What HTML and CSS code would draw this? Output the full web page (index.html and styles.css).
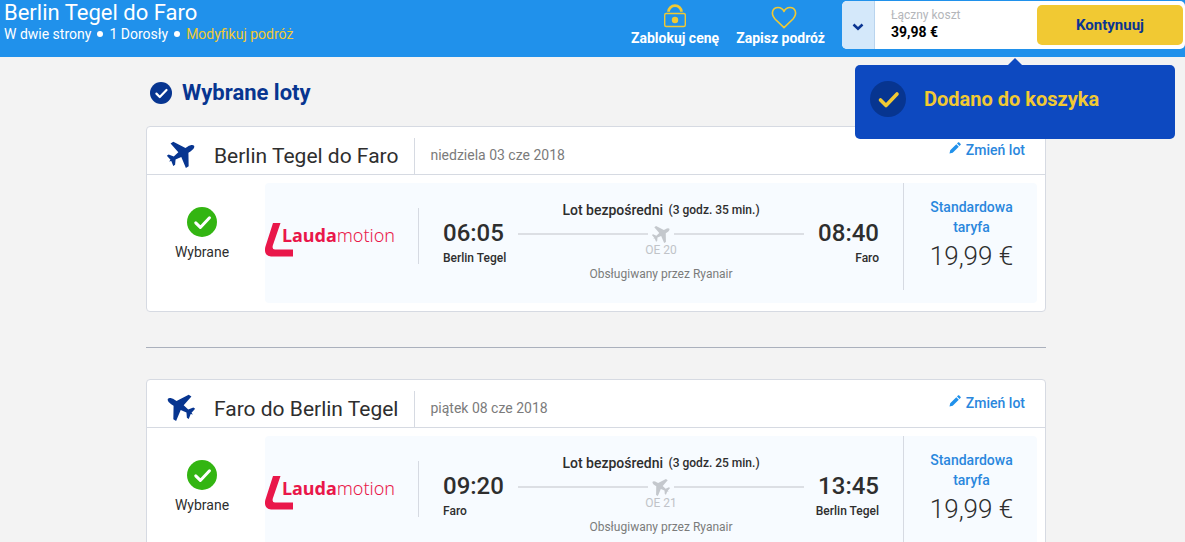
FILE: index.html
```html
<!DOCTYPE html>
<html lang="pl">
<head>
<meta charset="utf-8">
<title>Wybrane loty</title>
<link rel="stylesheet" href="styles.css">
</head>
<body>
<svg class="defs" aria-hidden="true">
  <symbol id="plane" viewBox="0 0 30 30" overflow="visible">
    <path transform="rotate(58 15 15)" d="M15 -1.500C16.800 -1.500 18 1.500 18 4.500V7.500L30.500 15V18.500L18 16.500L16.800 23L21.500 26.500V28.800L15.800 27.800L15 30L14.200 27.800L8.500 28.800V26.500L13.200 23L12 16.500L-0.500 18.500V15L12 7.500V4.500C12 1.500 13.200 -1.500 15 -1.500Z"/>
  </symbol>
  <symbol id="check" viewBox="0 0 36 36">
    <path d="M10.500 19L16 24.500L27 13" fill="none" stroke="currentColor" stroke-width="3.600" stroke-linecap="round" stroke-linejoin="round"/>
  </symbol>
  <symbol id="pencil" viewBox="0 0 12 12">
    <path d="M0.500 11.500L1.200 8.300L7.300 2.200L9.800 4.700L3.700 10.800ZM8 1.500L9.200 0.300Q9.600 0 10 0.300L11.700 2Q12 2.400 11.700 2.800L10.500 4Z"/>
  </symbol>
  <symbol id="lauda" viewBox="0 0 28 34">
    <path d="M8 0H15.500L7.800 22.500Q6.800 26.500 10 26.500H28V33.500H6Q-1.500 32.500 0.300 24Z"/>
  </symbol>
</svg>

<header class="topbar">
  <div class="trip">
    <h1 class="trip-title">Berlin Tegel do Faro</h1>
    <div class="trip-info">
      <span>W dwie strony</span><i class="dot"></i><span>1 Dorosły</span><i class="dot"></i><a class="modify" href="#">Modyfikuj podróż</a>
    </div>
  </div>
  <div class="actions">
    <button class="action" type="button">
      <svg class="action-icon" viewBox="0 0 24 24" fill="none" stroke="#f1c933" aria-hidden="true"><path d="M5.500 7.800A6.500 6.200 0 0 1 18.500 7.800" stroke-width="2.800"/><rect x="1.700" y="9.500" width="20.600" height="13" rx="1.500" stroke-width="1.400"/><circle cx="12" cy="16" r="3.200" fill="#f1c933" stroke="none"/></svg>
      Zablokuj cenę
    </button>
    <button class="action" type="button">
      <svg class="action-icon" viewBox="-3 0 24 24" fill="none" stroke="#f1c933" stroke-width="1.600" aria-hidden="true"><path d="M12 23.700L3 15C-2 9 1 3.500 6 3.500C9 3.500 11 5 12 7.500C13 5 15 3.500 18 3.500C23 3.500 26 9 21 15Z" stroke-linejoin="round"/></svg>
      Zapisz podróż
    </button>
  </div>
  <div class="cart">
    <button class="cart-toggle" type="button" aria-label="Pokaż szczegóły">
      <svg width="12" height="8" viewBox="0 0 12 8" fill="none" stroke="#0b3592" stroke-width="2.500" aria-hidden="true"><path d="M1.500 1.500L6 5.700L10.500 1.500"/></svg>
    </button>
    <div class="cart-total">
      <span class="cart-label">Łączny koszt</span>
      <strong class="cart-sum">39,98 €</strong>
    </div>
    <button class="continue" type="button">Kontynuuj</button>
    <div class="toast" role="status">
      <svg class="toast-icon" aria-hidden="true"><use href="#check"/></svg>
      <span>Dodano do koszyka</span>
    </div>
  </div>
</header>

<main class="page">
  <div class="content">
    <h2 class="section-title"><svg class="section-icon" aria-hidden="true"><use href="#check"/></svg>Wybrane loty</h2>

    <section class="card">
      <div class="card-head">
        <svg class="card-plane" aria-hidden="true"><use href="#plane"/></svg>
        <h3 class="route">Berlin Tegel do Faro</h3>
        <span class="date">niedziela 03 cze 2018</span>
        <a class="change" href="#"><svg class="pencil" aria-hidden="true"><use href="#pencil"/></svg>Zmień lot</a>
      </div>
      <div class="card-body">
        <div class="selected"><svg class="selected-icon" aria-hidden="true"><use href="#check"/></svg>Wybrane</div>
        <div class="panel">
          <div class="brand"><svg class="brand-mark" aria-hidden="true"><use href="#lauda"/></svg><span class="brand-name"><b>Lauda</b>motion</span></div>
          <div class="flight">
            <div class="summary"><strong>Lot bezpośredni</strong> <b class="duration">(3 godz. 35 min.)</b></div>
            <div class="stop"><span class="time">06:05</span><span class="city">Berlin Tegel</span></div>
            <div class="leg">
              <div class="line"><svg class="leg-plane" aria-hidden="true"><use href="#plane"/></svg></div>
              <span class="number">OE 20</span>
            </div>
            <div class="stop arrive"><span class="time">08:40</span><span class="city">Faro</span></div>
            <div class="operator">Obsługiwany przez Ryanair</div>
          </div>
          <div class="fare"><span class="fare-name">Standardowa taryfa</span><span class="price">19,99 €</span></div>
        </div>
      </div>
    </section>

    <hr class="divider">

    <section class="card">
      <div class="card-head">
        <svg class="card-plane back" aria-hidden="true"><use href="#plane"/></svg>
        <h3 class="route">Faro do Berlin Tegel</h3>
        <span class="date">piątek 08 cze 2018</span>
        <a class="change" href="#"><svg class="pencil" aria-hidden="true"><use href="#pencil"/></svg>Zmień lot</a>
      </div>
      <div class="card-body">
        <div class="selected"><svg class="selected-icon" aria-hidden="true"><use href="#check"/></svg>Wybrane</div>
        <div class="panel">
          <div class="brand"><svg class="brand-mark" aria-hidden="true"><use href="#lauda"/></svg><span class="brand-name"><b>Lauda</b>motion</span></div>
          <div class="flight">
            <div class="summary"><strong>Lot bezpośredni</strong> <b class="duration">(3 godz. 25 min.)</b></div>
            <div class="stop"><span class="time">09:20</span><span class="city">Faro</span></div>
            <div class="leg">
              <div class="line"><svg class="leg-plane back" aria-hidden="true"><use href="#plane"/></svg></div>
              <span class="number">OE 21</span>
            </div>
            <div class="stop arrive"><span class="time">13:45</span><span class="city">Berlin Tegel</span></div>
            <div class="operator">Obsługiwany przez Ryanair</div>
          </div>
          <div class="fare"><span class="fare-name">Standardowa taryfa</span><span class="price">19,99 €</span></div>
        </div>
      </div>
    </section>
  </div>
</main>
</body>
</html>
```

FILE: styles.css
```css
* { box-sizing: border-box; }
html { overflow: hidden; }
body {
  margin: 0;
  background: #f3f3f3;
  color: #2e2e2e;
  font-family: Roboto, "Liberation Sans", sans-serif;
  font-size: 14px;
  line-height: 20px;
}
h1, h2, h3 { margin: 0; font-weight: 400; }
button { border: 0; padding: 0; font: inherit; cursor: pointer; }
a { text-decoration: none; }
.defs { position: absolute; width: 0; height: 0; }

.topbar {
  display: flex;
  height: 57px;
  background: #2091eb;
  color: #fff;
}
.trip { flex: 1; padding-left: 4px; }
.trip-title { font-size: 22px; line-height: 25px; }
.trip-info { display: flex; align-items: center; line-height: 18px; }
.dot { width: 6px; height: 6px; margin: 0 6px; border-radius: 50%; background: #fff; }
.modify { color: #f1c933; }

.actions { display: flex; gap: 17px; margin-right: 17px; }
.action {
  display: flex;
  flex-direction: column;
  align-items: center;
  align-self: flex-start;
  padding-top: 4px;
  background: none;
  color: #fff;
  font-weight: 700;
}
.action-icon { width: 24px; height: 24px; overflow: visible; }

.cart {
  position: relative;
  display: flex;
  width: 343px;
  height: 48px;
  margin-top: 1px;
  border-radius: 5px;
  background: #fff;
}
.cart-toggle {
  display: flex;
  align-items: center;
  justify-content: center;
  width: 33px;
  padding-top: 4px;
  border-right: 1px solid #b9d4ee;
  border-radius: 5px 0 0 5px;
  background: #d4e8fa;
}
.cart-total { display: flex; flex: 1; flex-direction: column; padding: 5px 16px; }
.cart-label { color: #b4b6ba; font-size: 12px; line-height: 18px; }
.cart-sum { color: #000; line-height: 16px; }
.continue {
  width: 146px;
  margin: 4px 2px 4px 0;
  border-radius: 5px;
  background: #f1c933;
  color: #0b3592;
  font-size: 15px;
  font-weight: 700;
}
.toast {
  position: absolute;
  top: 64px;
  right: 10px;
  display: flex;
  align-items: center;
  gap: 18px;
  width: 320px;
  height: 74px;
  padding: 0 15px 6px;
  border-radius: 5px;
  background: #0d49c0;
  color: #f1c933;
  font-size: 20px;
  font-weight: 700;
}
.toast::before {
  content: "";
  position: absolute;
  top: -7px;
  left: 153px;
  border: 7px solid transparent;
  border-top: 0;
  border-bottom-color: #0d49c0;
}
.toast-icon { width: 36px; height: 36px; border-radius: 50%; background: #073590; }

.page { padding-left: 7px; }
.content { max-width: 900px; margin: 0 auto; }
.section-title {
  display: flex;
  align-items: center;
  gap: 10px;
  padding: 20px 0 18px 4px;
  color: #073590;
  font-size: 22px;
  font-weight: 700;
  line-height: 31px;
}
.section-icon { width: 22px; height: 22px; border-radius: 50%; background: #073590; color: #fff; }

.card { border: 1px solid #d6dae2; border-radius: 4px; background: #fff; }
.card-head {
  display: flex;
  align-items: flex-end;
  height: 48px;
  padding: 0 20px;
  border-bottom: 1px solid #d6dae2;
}
.card-plane { width: 28px; height: 28px; margin-bottom: 6px; fill: #073590; overflow: visible; }
.back { transform: scaleX(-1); }
.route {
  padding: 0 16px 0 19px;
  border-right: 1px solid #d6dae2;
  font-size: 21px;
  line-height: 36px;
}
.date { flex: 1; padding-left: 15px; color: #7b7b7b; line-height: 38px; }
.change { display: flex; gap: 5px; color: #2a87dd; font-weight: 500; line-height: 48px; }
.pencil { width: 12px; height: 12px; margin-top: 16px; fill: #2091eb; }

.card-body { display: flex; padding: 8px; }
.selected {
  display: flex;
  flex-direction: column;
  align-items: center;
  gap: 5px;
  width: 110px;
  padding: 24px 16px 0 0;
}
.selected-icon { width: 30px; height: 30px; border-radius: 50%; background: #33b512; color: #fff; }
.panel {
  display: flex;
  flex: 1;
  height: 120px;
  border-radius: 4px;
  background: #f7fbff;
}
.brand {
  display: flex;
  width: 154px;
  height: 56px;
  margin-top: 25px;
  padding-top: 15px;
  border-right: 1px solid #d6dae2;
  color: #e9174a;
}
.brand-mark { width: 28px; height: 34px; margin-right: -11px; fill: currentColor; }
.brand-name {
  font-family: "Noto Sans", sans-serif;
  font-size: 18px;
  font-weight: 300;
  line-height: 24px;
}
.brand-name b { font-weight: 700; }

.flight {
  display: grid;
  flex: 1;
  grid-template-columns: auto 1fr auto;
  align-content: start;
  column-gap: 15px;
  padding: 17px 24px 0;
}
.summary, .operator { grid-column: 1 / -1; text-align: center; }
.summary { line-height: 20px; }
.summary strong { font-weight: 500; }
.duration { margin-left: 2px; font-size: 12px; font-weight: 500; vertical-align: 1px; }
.stop { display: flex; flex-direction: column; width: 60px; white-space: nowrap; }
.arrive { align-items: flex-end; }
.time { font-size: 24px; font-weight: 500; line-height: 26px; }
.city { font-size: 12px; font-weight: 500; line-height: 24px; }
.leg { display: flex; flex-direction: column; align-items: center; }
.line { display: flex; align-items: center; align-self: stretch; gap: 4px; height: 28px; }
.line::before, .line::after { content: ""; flex: 1; height: 2px; background: #dcdfe4; }
.leg-plane { width: 18px; height: 18px; fill: #c4c8cd; overflow: visible; }
.number { color: #c0c3c8; font-size: 12px; line-height: 4px; }
.operator { color: #7b7b7b; font-size: 12px; line-height: 8px; }

.fare {
  display: flex;
  flex-direction: column;
  align-items: center;
  width: 134px;
  height: 107px;
  padding: 14px 18px 0 20px;
  border-left: 1px solid #d6dae2;
  text-align: center;
}
.fare-name { color: #2a87dd; font-weight: 500; }
.price { font-size: 26px; font-weight: 300; line-height: 38px; white-space: nowrap; }
.divider { margin: 35px 0 31px; border: 0; border-top: 1px solid #aab0bc; }
```
